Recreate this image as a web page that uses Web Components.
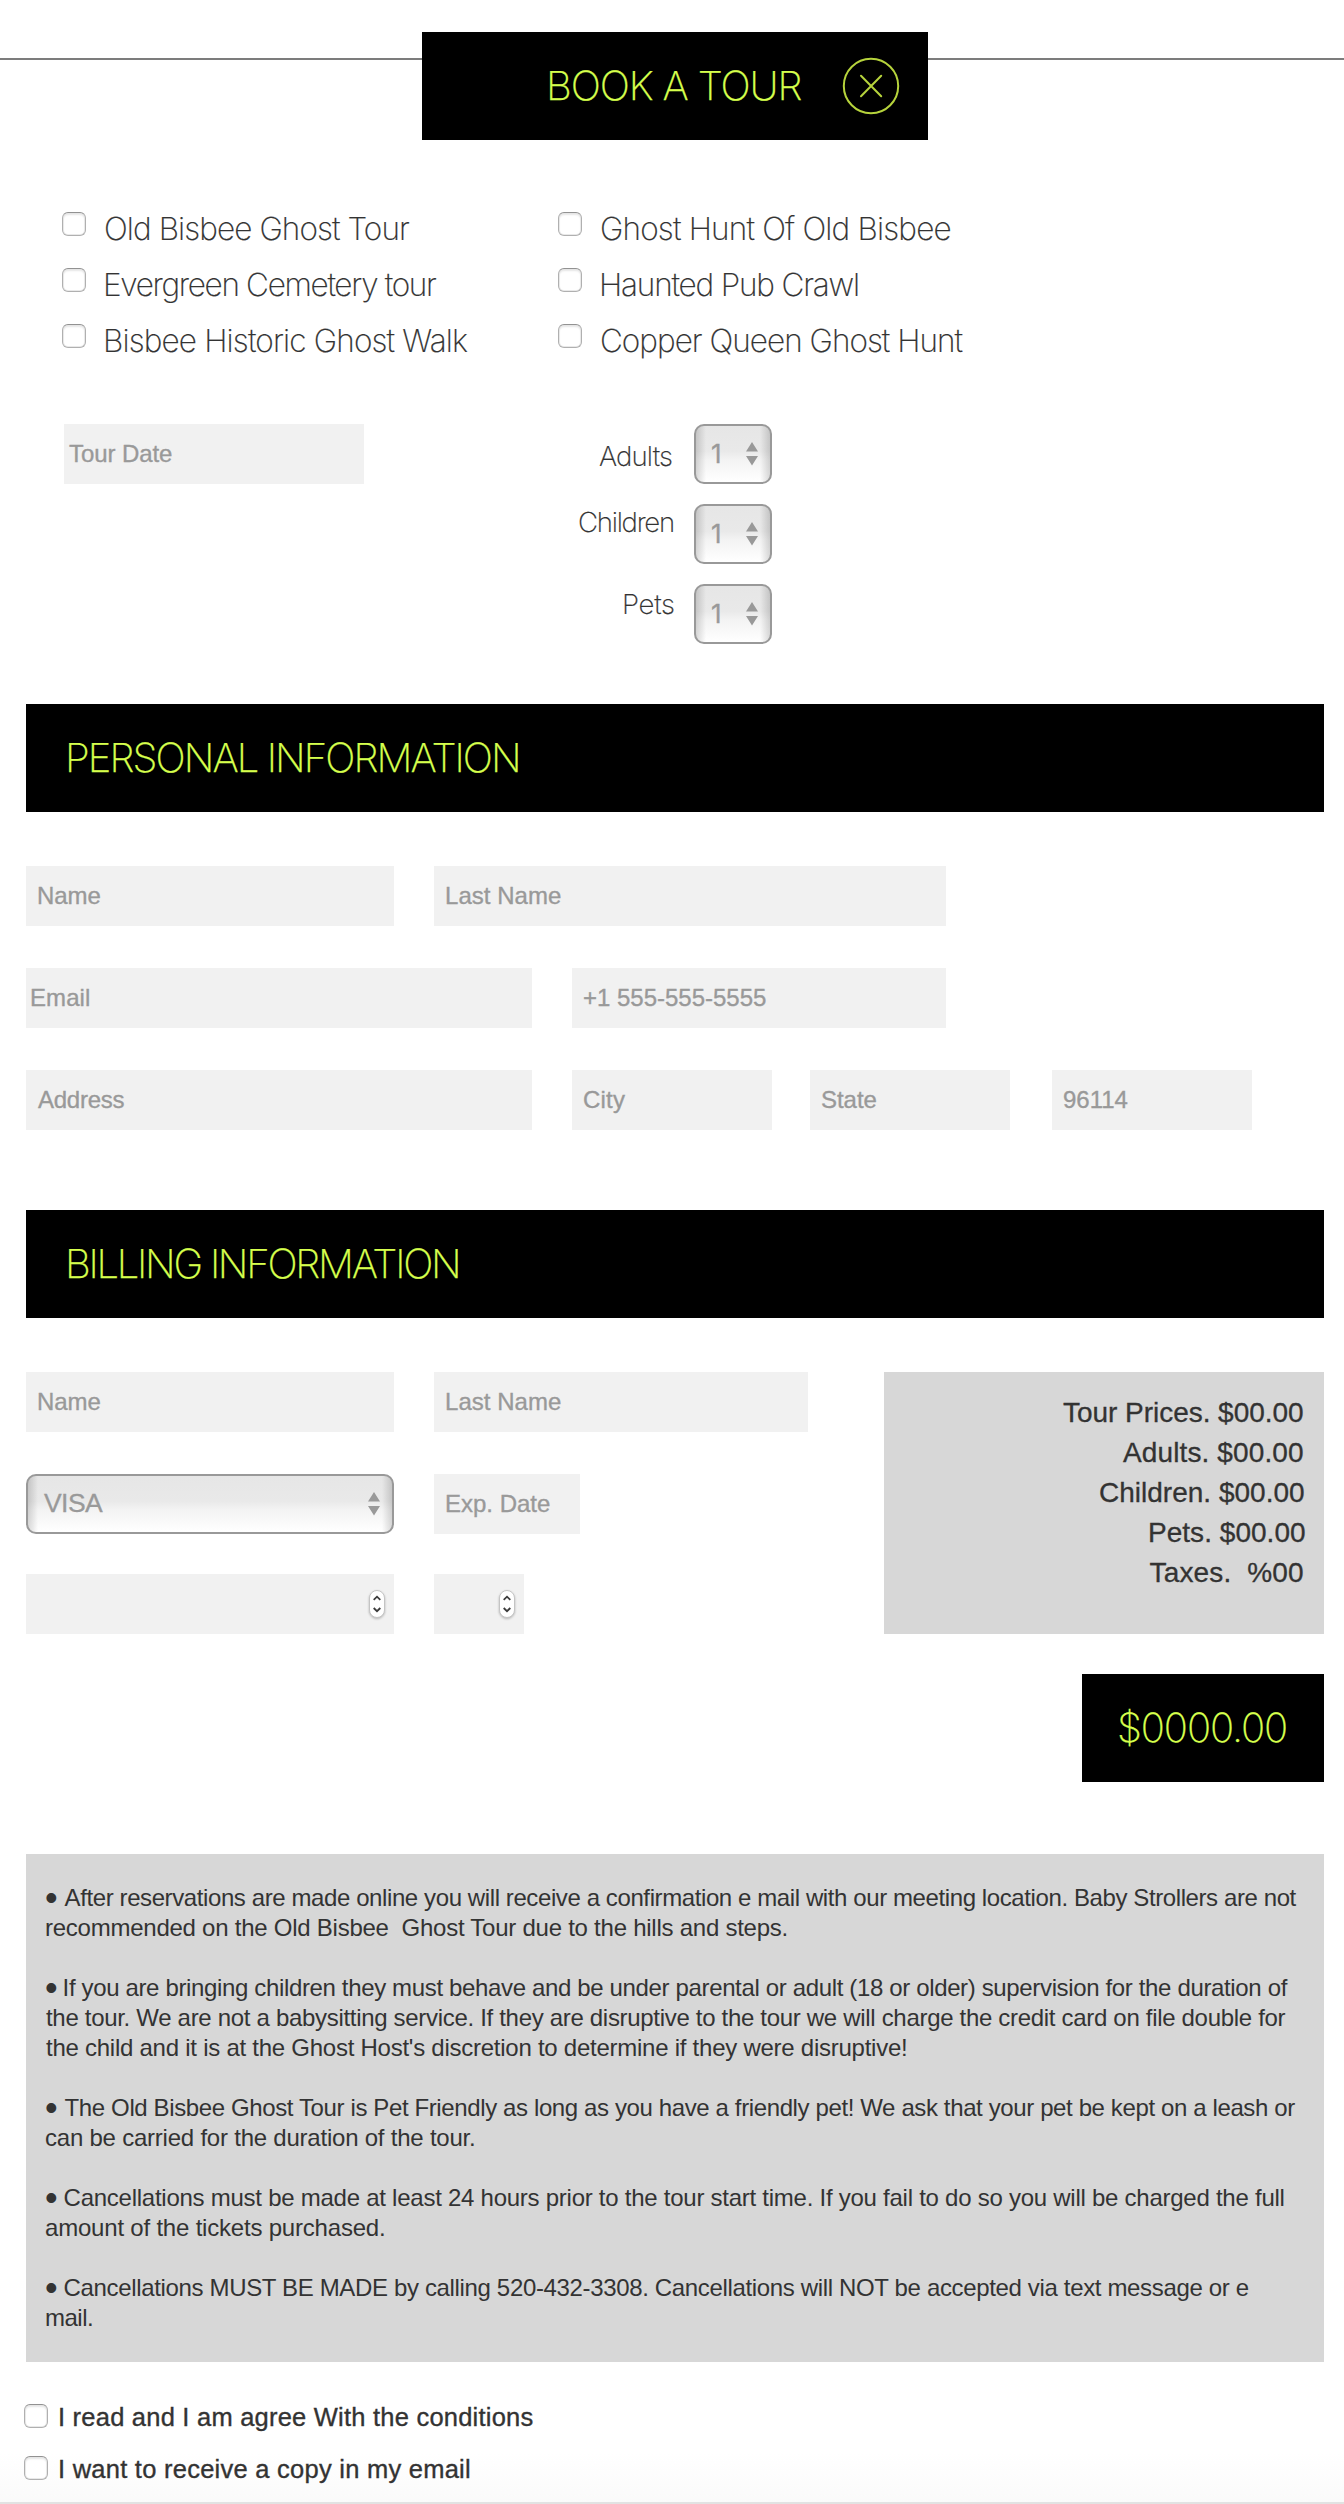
<!DOCTYPE html>
<html lang="en">
<head>
<meta charset="utf-8">
<title>Book a tour</title>
<style>
html,body{margin:0;padding:0}
body{background:#fff;color:#333;font-family:"Liberation Sans",Arial,sans-serif;overflow:hidden}
</style>
</head>
<body>
<booking-page></booking-page>
<script>
const define = (name, html, setup) => customElements.define(name, class extends HTMLElement {
  connectedCallback() {
    if (this.shadowRoot) return;
    const t = document.createElement('template');
    t.innerHTML = html;
    this.attachShadow({ mode: 'open' }).append(t.content.cloneNode(true));
    if (setup) setup(this, this.shadowRoot);
  }
});

/* One line of type whose tracking is set so that it spans a given width. */
const ctx = document.createElement('canvas').getContext('2d');
define('fit-text', `<style>
  :host{display:block;white-space:pre;font-kerning:normal;font-variant-ligatures:none;flex:none}
  </style><slot></slot>`, el => {
  const w = +el.getAttribute('w'), text = el.textContent, s = getComputedStyle(el);
  ctx.font = `${s.fontWeight} ${s.fontSize} ${s.fontFamily}`;
  const m = ctx.measureText(text);
  const ink = m.actualBoundingBoxRight + m.actualBoundingBoxLeft;
  const sp = (w - ink) / Math.max(1, text.length - 1);
  el.style.letterSpacing = sp.toFixed(3) + 'px';
  el.style.marginLeft = m.actualBoundingBoxLeft.toFixed(2) + 'px';
  el.style.width = (w + 1) + 'px';
});

define('lime-bar', `<style>
  :host{display:flex;box-sizing:border-box;height:108px;background:#000;color:#d6ff4d;
    font:200 40px/108px Inter,"Liberation Sans",sans-serif;padding-left:43px;-webkit-text-stroke:.25px}
  </style><slot></slot>`);

define('close-icon', `<style>:host{display:block;width:58px;height:58px}svg{display:block}</style>
  <svg width="58" height="58" viewBox="0 0 58 58" fill="none" stroke="#b6d33c" stroke-width="2">
  <circle cx="29" cy="29" r="27.200"/><path d="M19 18.800L39.200 39.200M39.200 18.800L19 39.200" stroke-linecap="round" stroke-width="2"/></svg>`);

define('page-head', `<style>
  :host{display:flex;align-items:flex-start;height:212px}
  i{height:2px;background:#7c7c7c;margin-top:58px}
  .l{width:422px}.r{flex:1}
  lime-bar{width:506px;margin-top:32px;padding-left:128px}
  close-icon{margin:25px 0 0 43px}
  </style><i class="l"></i><lime-bar><fit-text w="251.500">BOOK A TOUR</fit-text><close-icon></close-icon></lime-bar><i class="r"></i>`);

define('check-box', `<style>
  :host{display:block;box-sizing:border-box;flex:none;width:24px;height:24px;border:1px solid #b0b0b0;border-top-color:#929292;
   border-radius:6px;background:#fff;box-shadow:inset 0 2px 2px #e6e6e6,inset 0 0 0 1px #e9e9e9}
  </style>`);

define('tour-option', `<style>
  :host{display:flex;height:56px;font:200 31.500px/34px Inter,"Liberation Sans",sans-serif;gap:20px;-webkit-text-stroke:.2px}
  </style><check-box></check-box><slot></slot>`);

define('text-field', `<style>
  :host{display:flex;box-sizing:border-box;flex:none;height:60px;background:#f1f1f1;color:#999;font-size:24px;line-height:60px;padding-left:12px;-webkit-text-stroke:.35px}
  :host([tight]){padding-left:5px}
  </style><slot></slot>`, el => el.style.width = el.getAttribute('width') + 'px');

define('select-box', `<style>
  :host{display:flex;box-sizing:border-box;flex:none;height:60px;border:2px solid #999;border-radius:10px;color:#999;
   justify-content:space-between;align-items:center;font-size:26.500px;line-height:55px;padding:0 12px 0 16px;-webkit-text-stroke:.3px;
   background:linear-gradient(90deg,rgba(0,0,0,.15),transparent 10px,transparent calc(100% - 10px),rgba(0,0,0,.15)),linear-gradient(#e6e6e6,#e9e9e9 45%,#f3f3f3 60%,#fff)}
  svg{display:block;flex:none;margin-bottom:1px}
  ::slotted(*){margin-bottom:2px}
  </style><slot></slot><svg width="12" height="24" viewBox="0 0 12 24" fill="#999"><path d="M6 0L12 9.500H0zM0 14H12L6 23.500z"/></svg>`,
  el => el.style.width = el.getAttribute('width') + 'px');

define('number-field', `<style>
  :host{display:flex;box-sizing:border-box;flex:none;height:60px;background:#f1f1f1;justify-content:flex-end;padding:16px 9px 0 0}
  svg{display:block;filter:drop-shadow(0 1px 1px rgba(0,0,0,.25))}
  </style><svg width="16" height="29" viewBox="0 0 16 29" fill="none"><rect x=".5" y=".5" width="15" height="27" rx="7.500" fill="#fff" stroke="#c4c4c4"/>
  <path d="M4.700 9.800L8 6.700l3.300 3.100M4.700 18l3.300 3.200 3.300-3.200" stroke="#3b3b3b" stroke-width="1.800"/></svg>`,
  el => el.style.width = el.getAttribute('width') + 'px');

define('field-row', `<style>:host{display:flex;gap:40px}</style><slot></slot>`);

define('count-row', `<style>
  :host{display:flex;justify-content:flex-end;gap:21px;height:80px;font:200 27.600px/40px Inter,"Liberation Sans",sans-serif}
  ::slotted(*){-webkit-text-stroke:.2px}
  select-box{font-weight:400;font-size:26px}
  </style><slot></slot><select-box width="78"><fit-text w="9.500">1</fit-text></select-box>`);

define('tour-picker', `<style>
  :host{display:block;height:492px}
  .opts{display:flex;padding-left:62px;height:212px}
  .opts>div{width:496px}
  .row{display:flex;align-items:flex-start;padding-left:64px}
  .counts{width:408px}
  .a{margin-top:12px}.c{margin-top:-2px}.p{margin-top:0}
  </style>
  <div class="opts"><div>
  <tour-option><fit-text w="303">Old Bisbee Ghost Tour</fit-text></tour-option>
  <tour-option><fit-text w="330">Evergreen Cemetery tour</fit-text></tour-option>
  <tour-option><fit-text w="362">Bisbee Historic Ghost Walk</fit-text></tour-option></div><div>
  <tour-option><fit-text w="348.500">Ghost Hunt Of Old Bisbee</fit-text></tour-option>
  <tour-option><fit-text w="256">Haunted Pub Crawl</fit-text></tour-option>
  <tour-option><fit-text w="360.500">Copper Queen Ghost Hunt</fit-text></tour-option></div></div>
  <div class="row"><text-field tight width="300"><fit-text w="103">Tour Date</fit-text></text-field>
  <div class="counts"><count-row><fit-text class="a" w="73">Adults</fit-text></count-row>
  <count-row><fit-text class="c" w="94">Children</fit-text></count-row>
  <count-row><fit-text class="p" w="50">Pets</fit-text></count-row></div></div>`);

define('personal-section', `<style>
  :host{display:flex;flex-direction:column;margin-left:26px;width:1298px;height:506px}
  field-row{margin-bottom:42px}lime-bar{margin-bottom:54px}
  .st{margin-left:-2px}.zip{margin-left:2px}
  </style><lime-bar><fit-text w="449">PERSONAL INFORMATION</fit-text></lime-bar>
  <field-row><text-field width="368"><fit-text w="62.500">Name</fit-text></text-field><text-field width="512"><fit-text w="115">Last Name</fit-text></text-field></field-row>
  <field-row><text-field tight width="506"><fit-text w="58">Email</fit-text></text-field><text-field width="374"><fit-text w="182">+1 555-555-5555</fit-text></text-field></field-row>
  <field-row><text-field width="506"><fit-text w="86.500">Address</fit-text></text-field><text-field width="200"><fit-text w="41">City</fit-text></text-field><text-field class="st" width="200"><fit-text w="54.500">State</fit-text></text-field><text-field class="zip" width="200"><fit-text w="63.500">96114</fit-text></text-field></field-row>`);

define('price-summary', `<style>
  :host{display:flex;flex-direction:column;align-items:flex-end;box-sizing:border-box;width:440px;height:262px;background:#d7d7d7;
  padding:21px 20px 0 0;font-size:28px;line-height:40px;-webkit-text-stroke:.3px}
  </style><slot></slot>`);

define('billing-section', `<style>
  :host{display:flex;flex-direction:column;margin-left:26px;width:1298px;height:644px}
  lime-bar{margin-bottom:54px}
  .body{display:flex;justify-content:space-between}
  .fields{display:flex;flex-direction:column;gap:42px}
  .last{margin-top:-2px}
  .total{align-self:flex-end;width:242px;margin:40px 0 0;padding-left:37px}
  </style><lime-bar><fit-text w="389">BILLING INFORMATION</fit-text></lime-bar>
  <div class="body"><div class="fields">
  <field-row><text-field width="368"><fit-text w="62.500">Name</fit-text></text-field><text-field width="374"><fit-text w="115">Last Name</fit-text></text-field></field-row>
  <field-row><select-box width="368"><fit-text w="59">VISA</fit-text></select-box><text-field width="146"><fit-text w="104">Exp. Date</fit-text></text-field></field-row>
  <field-row class="last"><number-field width="368"></number-field><number-field width="90"></number-field></field-row></div>
  <price-summary><fit-text w="240">Tour Prices. $00.00</fit-text><fit-text w="180">Adults. $00.00</fit-text><fit-text w="204">Children. $00.00</fit-text><fit-text w="155">Pets. $00.00</fit-text><fit-text w="153.500">Taxes.  %00</fit-text></price-summary></div>
  <lime-bar class="total"><fit-text w="167">$0000.00</fit-text></lime-bar>`);

define('term-item', `<style>
  :host{display:flex}
  b{font-weight:400;font-size:36px;line-height:30px;width:18.600px;text-indent:-1px;flex:none}
  </style><b>•</b><slot></slot>`);

define('tour-terms', `<style>
  :host{display:flex;flex-direction:column;gap:30px;box-sizing:border-box;margin-left:26px;width:1298px;height:508px;background:#d7d7d7;padding:29px 0 0 20px;font-size:24px;line-height:30px}
  </style>
  <div><term-item><fit-text w="1232">After reservations are made online you will receive a confirmation e mail with our meeting location. Baby Strollers are not</fit-text></term-item>
  <fit-text w="741">recommended on the Old Bisbee  Ghost Tour due to the hills and steps.</fit-text></div>
  <div><term-item><fit-text w="1223">If you are bringing children they must behave and be under parental or adult (18 or older) supervision for the duration of</fit-text></term-item>
  <fit-text w="1239.500">the tour. We are not a babysitting service. If they are disruptive to the tour we will charge the credit card on file double for</fit-text>
  <fit-text w="860">the child and it is at the Ghost Host's discretion to determine if they were disruptive!</fit-text></div>
  <div><term-item><fit-text w="1231">The Old Bisbee Ghost Tour is Pet Friendly as long as you have a friendly pet! We ask that your pet be kept on a leash or</fit-text></term-item>
  <fit-text w="428">can be carried for the duration of the tour.</fit-text></div>
  <div><term-item><fit-text w="1219">Cancellations must be made at least 24 hours prior to the tour start time. If you fail to do so you will be charged the full</fit-text></term-item>
  <fit-text w="338">amount of the tickets purchased.</fit-text></div>
  <div><term-item><fit-text w="1185">Cancellations MUST BE MADE by calling 520-432-3308. Cancellations will NOT be accepted via text message or e</fit-text></term-item>
  <fit-text w="46">mail.</fit-text></div>`);

define('agree-row', `<style>
  :host{display:flex;gap:12px;height:52px;font-size:25.500px;line-height:26px;-webkit-text-stroke:.35px}
  </style><check-box></check-box><slot></slot>`);

define('page-foot', `<style>
  :host{display:block;box-sizing:border-box;height:142px;padding:42px 0 0 24px;border-bottom:2px solid #e2e2e2;background:linear-gradient(#fff 65%,#fafafa)}
  </style><agree-row><fit-text w="472.500">I read and I am agree With the conditions</fit-text></agree-row>
  <agree-row><fit-text w="409">I want to receive a copy in my email</fit-text></agree-row>`);

define('booking-page', `<style>:host{display:block;width:1344px;height:2504px;overflow:hidden}</style>
  <page-head></page-head><tour-picker></tour-picker><personal-section></personal-section>
  <billing-section></billing-section><tour-terms></tour-terms><page-foot></page-foot>`);
</script>
</body>
</html>
